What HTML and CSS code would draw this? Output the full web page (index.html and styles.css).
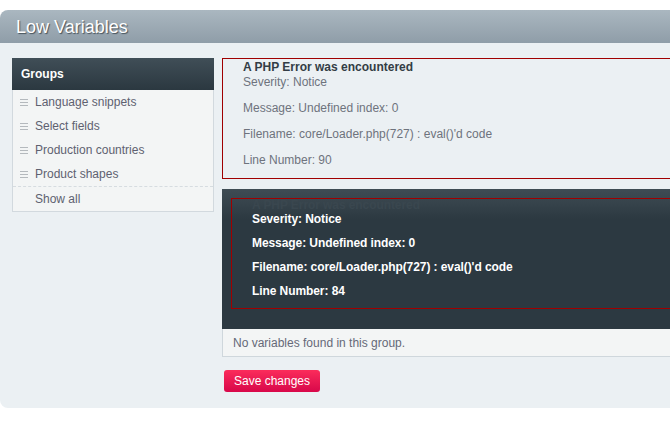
FILE: index.html
```html
<!DOCTYPE html>
<html lang="en">
<head>
    <meta charset="UTF-8">
    <meta name="viewport" content="width=device-width, initial-scale=1.0">
    <title>Low Variables</title>
    <link rel="stylesheet" href="styles.css">
</head>
<body>
    <div class="page">
        <div class="pageheader">
            <h1>Low Variables</h1>
        </div>
        <div class="pagebody">
            <div class="sidebar">
                <h2>Groups</h2>
                <ul class="groups">
                    <li><span class="handle"></span>Language snippets</li>
                    <li><span class="handle"></span>Select fields</li>
                    <li><span class="handle"></span>Production countries</li>
                    <li><span class="handle"></span>Product shapes</li>
                </ul>
                <div class="showall">Show all</div>
            </div>
            <div class="main">
                <div class="phperror">
                    <h4>A PHP Error was encountered</h4>
                    <p>Severity: Notice</p>
                    <p>Message: Undefined index: 0</p>
                    <p>Filename: core/Loader.php(727) : eval()'d code</p>
                    <p>Line Number: 90</p>
                </div>
                <div class="tablehead">
                    <div class="phperror dark">
                        <h4>A PHP Error was encountered</h4>
                        <p>Severity: Notice</p>
                        <p>Message: Undefined index: 0</p>
                        <p>Filename: core/Loader.php(727) : eval()'d code</p>
                        <p>Line Number: 84</p>
                    </div>
                </div>
                <div class="emptyrow">No variables found in this group.</div>
                <button class="savebtn">Save changes</button>
            </div>
        </div>
    </div>
</body>
</html>
```

FILE: styles.css
```css
html{
    overflow: hidden;
}
body{
    margin: 0;
    background-color: #ffffff;
    font-family: "Liberation Sans", Arial, sans-serif;
    font-size: 12px;
}
.page{
    margin-top: 10px;
    width: 700px;
}
.pageheader{
    height: 33px;
    background: linear-gradient(#aab7c0, #8f9da8);
    border-radius: 8px 0 0 0;
}
.pageheader h1{
    margin: 0;
    padding-left: 16px;
    font-size: 18px;
    font-weight: normal;
    line-height: 34px;
    color: #ffffff;
    text-shadow: 1px 1px 1px #46525b;
}
.pagebody{
    display: flex;
    gap: 8px;
    background-color: #ebf0f3;
    padding: 15px 0 16px 12px;
    border-radius: 0 0 0 8px;
}
.sidebar{
    width: 200px;
    flex-shrink: 0;
    align-self: flex-start;
    background-color: #f3f5f5;
    border: 1px solid #d2d9de;
    border-top: none;
}
.sidebar h2{
    margin: 0 -1px;
    height: 32px;
    padding-left: 9px;
    font-size: 12px;
    line-height: 32px;
    color: #ffffff;
    background: linear-gradient(#404e57, #2b3840);
}
.groups{
    list-style: none;
    margin: 0;
    padding: 0;
}
.groups li{
    display: flex;
    align-items: center;
    height: 24px;
    color: #5e6170;
}
.handle{
    width: 8px;
    height: 5px;
    margin: 0 7px 0 7px;
    border-top: 1px solid #b4b9bd;
    border-bottom: 1px solid #b4b9bd;
    background: linear-gradient(transparent 2px, #b4b9bd 2px, #b4b9bd 3px, transparent 3px);
}
.showall{
    height: 24px;
    line-height: 25px;
    padding-left: 22px;
    color: #5e6170;
    border-top: 1px dashed #d6dce0;
}
.main{
    flex: 1;
}
.phperror{
    border: 1px solid #a00000;
    padding: 1px 0 0 20px;
    color: #6e737d;
}
.phperror h4{
    margin: 0;
    font-size: 12px;
    line-height: 15px;
    color: #333d45;
}
.phperror p{
    margin: 0 0 11px;
    line-height: 15px;
}
.phperror p:last-child{
    margin-bottom: 10px;
}
.tablehead{
    margin-top: 10px;
    padding: 9px 0 20px 9px;
    background: linear-gradient(#3f4c54, #2c3941 30px, #2c3941);
}
.phperror.dark{
    padding-top: 0;
    color: #ffffff;
    font-weight: bold;
    letter-spacing: -0.08px;
}
.phperror.dark h4{
    line-height: 13px;
    color: #3a474f;
}
.phperror.dark p{
    line-height: 14px;
    margin-bottom: 10px;
}
.emptyrow{
    height: 27px;
    line-height: 28px;
    padding-left: 10px;
    color: #656978;
    background-color: #f3f5f5;
    border-left: 1px solid #cfd7dc;
    border-bottom: 1px solid #cfd7dc;
}
.savebtn{
    margin: 13px 0 0 2px;
    height: 22px;
    width: 96px;
    padding: 0;
    font-family: "Liberation Sans", Arial, sans-serif;
    font-size: 12px;
    color: #ffffff;
    background: linear-gradient(#fb2c5b, #d8084a);
    border: none;
    border-radius: 3px;
}
```
